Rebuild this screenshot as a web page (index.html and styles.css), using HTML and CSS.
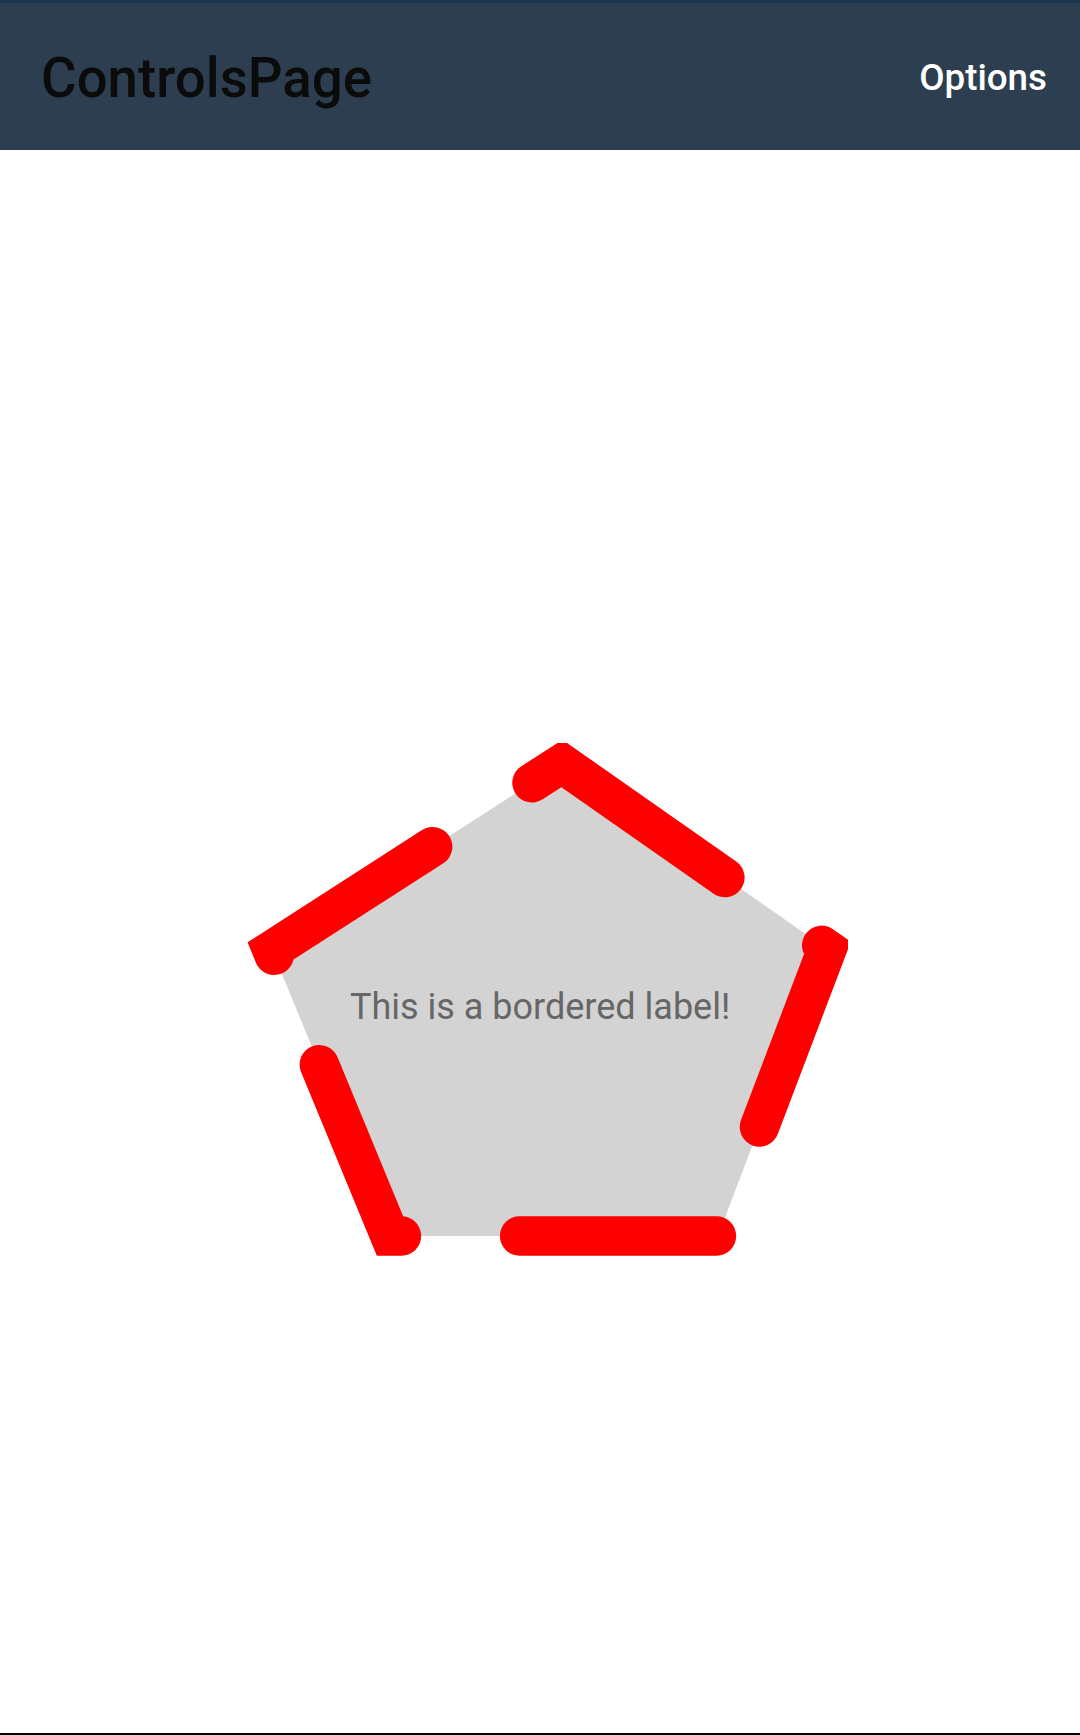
FILE: index.html
```html
<!DOCTYPE html>
<html lang="en">
<head>
<meta charset="utf-8">
<title>ControlsPage</title>
<link rel="stylesheet" href="styles.css">
</head>
<body>
<div class="page">
  <header class="appbar">
    <div class="statusline"></div>
    <div class="toolbar">
      <span class="title">ControlsPage</span>
      <span class="action">Options</span>
    </div>
  </header>
  <main class="content">
    <div class="shape">
      <svg class="shape-svg" width="600" height="513" viewBox="248 743 600 513" xmlns="http://www.w3.org/2000/svg">
        <path class="pentagon" d="M531.97 782.81 L562 763.5 L827 949 L718 1236 L390 1236 L272 950 Z"/>
      </svg>
      <span class="label">This is a bordered label!</span>
    </div>
  </main>
  <div class="bottom-line"></div>
</div>
</body>
</html>
```

FILE: styles.css
```css
html, body {
  margin: 0;
  padding: 0;
  background: #ffffff;
}

.page {
  display: flex;
  flex-direction: column;
  height: 1735px;
  font-family: Roboto, "Noto Sans", "Liberation Sans", sans-serif;
}

.statusline {
  height: 3px;
  background: #1d3550;
}

.toolbar {
  height: 147px;
  background: #2c3e50;
  display: flex;
  align-items: center;
  justify-content: space-between;
  padding: 0 33px 0 41px;
}

.title {
  font-size: 54.6px;
  font-weight: 500;
  line-height: 1;
  color: #0b0b0b;
  margin-top: 3px;
}

.action {
  font-size: 36.75px;
  font-weight: 500;
  line-height: 1;
  color: #ffffff;
  margin-top: 3px;
}

.content {
  flex: 1;
  padding: 593px 0 0 248px;
}

.shape {
  position: relative;
  width: 600px;
  height: 513px;
}

.shape-svg {
  display: block;
  overflow: hidden;
}

.pentagon {
  fill: #d3d3d3;
  stroke: #ff0000;
  stroke-width: 39.375;
  stroke-linecap: round;
  stroke-linejoin: miter;
  stroke-dasharray: 234.6 118.1 196.9 118.1 196.9 118.1 196.9 118.1 196.9 300;
}

.label {
  position: absolute;
  left: 102px;
  top: 243px;
  font-size: 36px;
  line-height: 43px;
  color: #666666;
  white-space: nowrap;
}

.bottom-line {
  height: 2px;
  background: #000000;
}
```
